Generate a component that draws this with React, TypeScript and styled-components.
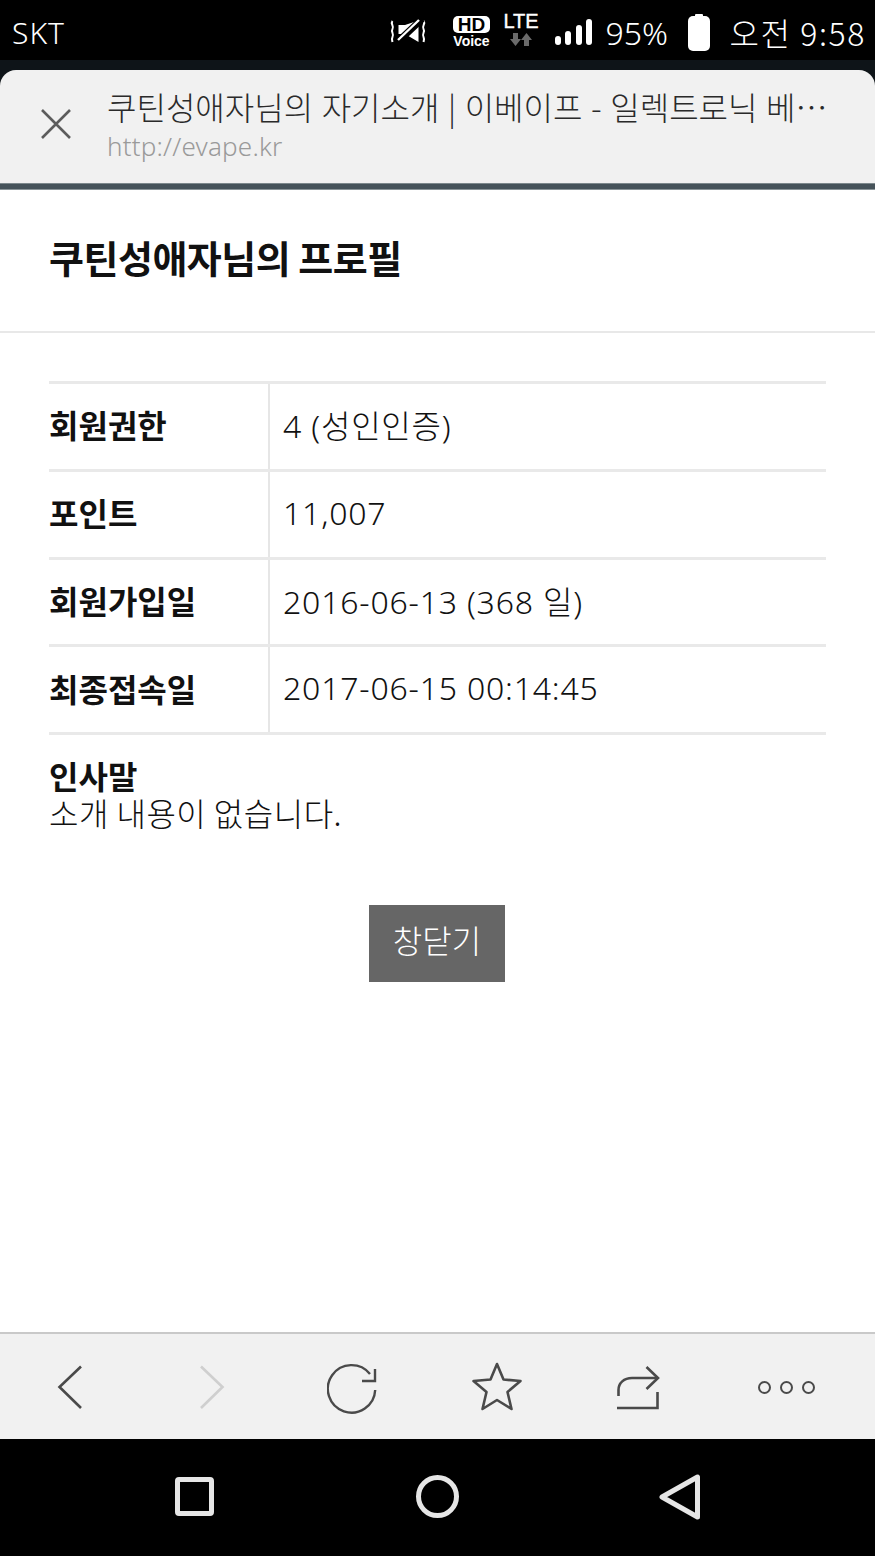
import React from "react";
import styled, { createGlobalStyle } from "styled-components";

const FONT = `"Noto Sans CJK KR", "Noto Sans", sans-serif`;
const VALUE_FONT = `"Noto Sans", "Noto Sans CJK KR", sans-serif`;

const GlobalStyle = createGlobalStyle`
  html, body {
    margin: 0;
    padding: 0;
    background: #000;
  }
  * {
    box-sizing: border-box;
  }
`;

const rows = [
  { label: "회원권한", value: "4 (성인인증)" },
  { label: "포인트", value: "11,007" },
  { label: "회원가입일", value: "2016-06-13 (368 일)" },
  { label: "최종접속일", value: "2017-06-15 00:14:45" },
];

export default function App() {
  return (
    <Screen>
      <GlobalStyle />
      <StatusBar>
        <Carrier>SKT</Carrier>
        <StatusRight>
          <MuteIcon width="38" height="26" viewBox="0 0 38 26" fill="none" stroke="#fff">
            <path d="M3.500 2 C1 5 5.500 7 3.500 10 C1.500 13 5.500 15 3.500 18 C2.500 20 3 21 3.500 23" strokeWidth="2" />
            <path d="M34.500 2 C37 5 32.500 7 34.500 10 C36.500 13 32.500 15 34.500 18 C35.500 20 35 21 34.500 23" strokeWidth="2" />
            <path d="M9.500 6 H16 L29.500 1.500 V23 L16 15 H9.500 Z" fill="#fff" stroke="none" />
            <path d="M8 23.500 L33 0" strokeWidth="7" stroke="#000" />
            <path d="M9 21 L30 1" strokeWidth="2.400" />
          </MuteIcon>
          <HdBadge>
            <HdBox>HD</HdBox>
            <HdVoice>Voice</HdVoice>
          </HdBadge>
          <LteBadge>
            <LteText>LTE</LteText>
            <svg width="24" height="14" viewBox="0 0 24 14" fill="#6a6a6a">
              <path d="M4 1 H9 V7 H12 L6.500 14 L1 7 H4 Z" />
              <path d="M15 14 H20 V8 H23 L17.500 1 L12 8 H15 Z" />
            </svg>
          </LteBadge>
          <SignalIcon width="38" height="28" viewBox="0 0 38 28" fill="#fff">
            <rect x="0" y="18" width="6" height="9" rx="3" />
            <rect x="10" y="13" width="6" height="14" rx="3" />
            <rect x="21" y="7" width="6" height="20" rx="3" />
            <rect x="31" y="1" width="6" height="26" rx="3" />
          </SignalIcon>
          <Percent>95%</Percent>
          <BatteryIcon width="22" height="37" viewBox="0 0 22 37" fill="#fff">
            <rect x="7" y="0" width="8" height="4" rx="1" />
            <rect x="0" y="2" width="22" height="35" rx="5" />
          </BatteryIcon>
          <Clock>오전 9:58</Clock>
        </StatusRight>
      </StatusBar>

      <Gap>
        <TabHeader>
          <CloseButton>
            <svg width="32" height="32" viewBox="0 0 32 32" stroke="#5c5c5c" strokeWidth="2.600" fill="none">
              <path d="M2 2 L30 30 M30 2 L2 30" />
            </svg>
          </CloseButton>
          <TabText>
            <TabTitle>쿠틴성애자님의 자기소개 | 이베이프 - 일렉트로닉 베이프 커뮤니티</TabTitle>
            <TabUrl>http://evape.kr</TabUrl>
          </TabText>
        </TabHeader>
        <TabEdge />
      </Gap>

      <Content>
        <PageTitle>쿠틴성애자님의 프로필</PageTitle>
        <Body>
          <InfoTable>
            {rows.map((row) => (
              <InfoRow key={row.label}>
                <InfoLabel>{row.label}</InfoLabel>
                <InfoValue>{row.value}</InfoValue>
              </InfoRow>
            ))}
          </InfoTable>
          <Greeting>
            <GreetingLabel>인사말</GreetingLabel>
            <GreetingText>소개 내용이 없습니다.</GreetingText>
          </Greeting>
          <ButtonRow>
            <CloseWindow>창닫기</CloseWindow>
          </ButtonRow>
        </Body>
      </Content>

      <Toolbar>
        <ToolSlot>
          <svg width="26" height="44" viewBox="0 0 26 44" fill="none" stroke="#4a4a4a" strokeWidth="2.600">
            <path d="M24 1.500 L2.500 22 L24 43" />
          </svg>
        </ToolSlot>
        <ToolSlot>
          <svg width="26" height="44" viewBox="0 0 26 44" fill="none" stroke="#cfcfcf" strokeWidth="2.600">
            <path d="M2 1.500 L23.500 22 L2 43" />
          </svg>
        </ToolSlot>
        <ToolSlot>
          <svg width="52" height="54" viewBox="0 0 52 54" fill="none" stroke="#4a4a4a" strokeWidth="2.400">
            <path d="M48.200 30 A23.700 23.700 0 1 1 43 14" />
            <path d="M48 9 V21 H35" />
          </svg>
        </ToolSlot>
        <ToolSlot>
          <svg width="52" height="50" viewBox="0 0 52 50" fill="none" stroke="#4a4a4a" strokeWidth="2.600" strokeLinejoin="round">
            <path d="M26 2 L32.500 17.500 L49.500 19 L36.500 30 L40.500 47 L26 38 L11.500 47 L15.500 30 L2.500 19 L19.500 17.500 Z" />
          </svg>
        </ToolSlot>
        <ToolSlot>
          <svg width="44" height="46" viewBox="0 0 44 46" fill="none" stroke="#4a4a4a" strokeWidth="2.600">
            <path d="M2.500 32 V26 C2.500 19 8 14 16 14 H41" />
            <path d="M30.500 3 L42 14 L30.500 25" />
            <path d="M41.500 28 V44 H1" />
          </svg>
        </ToolSlot>
        <ToolSlot>
          <Dots>
            <Dot />
            <Dot />
            <Dot />
          </Dots>
        </ToolSlot>
      </Toolbar>

      <NavBar>
        <NavSquare />
        <NavCircle />
        <svg width="42" height="46" viewBox="0 0 42 46" fill="none" stroke="#e6e6e6" strokeWidth="5" strokeLinejoin="round">
          <path d="M38.500 3 V43 L3 23 Z" />
        </svg>
      </NavBar>
    </Screen>
  );
}

const Screen = styled.div`
  width: 875px;
  height: 1556px;
  display: flex;
  flex-direction: column;
  overflow: hidden;
  background: #000;
  font-family: ${FONT};
`;

const StatusBar = styled.div`
  height: 60px;
  flex: none;
  display: flex;
  align-items: center;
  justify-content: space-between;
  padding: 4px 9px 0 12px;
  background: #000;
  color: #fff;
`;

const Carrier = styled.span`
  font-family: "Noto Sans", sans-serif;
  font-size: 30px;
  font-weight: 300;
  letter-spacing: 1px;
`;

const StatusRight = styled.div`
  display: flex;
  align-items: center;
`;

const MuteIcon = styled.svg`
  flex: none;
`;

const HdBadge = styled.div`
  display: flex;
  flex: none;
  flex-direction: column;
  align-items: center;
  margin-left: 25px;
  width: 38px;
`;

const HdBox = styled.span`
  width: 37px;
  height: 17px;
  margin-top: 1px;
  border-radius: 5px;
  background: #fff;
  color: #000;
  font-family: "Liberation Sans", sans-serif;
  font-size: 19px;
  font-weight: 700;
  line-height: 17px;
  text-align: center;
`;

const HdVoice = styled.span`
  font-family: "Liberation Sans", sans-serif;
  font-size: 14px;
  font-weight: 700;
  line-height: 16px;
`;

const LteBadge = styled.div`
  display: flex;
  flex: none;
  flex-direction: column;
  align-items: center;
  margin: -8px 0 0 14px;
  width: 33px;
  line-height: 0;
`;

const LteText = styled.span`
  font-family: "Liberation Sans", sans-serif;
  font-size: 20px;
  -webkit-text-stroke: 0.4px #fff;
  line-height: 22px;
`;

const SignalIcon = styled.svg`
  flex: none;
  margin-left: 18px;
`;

const Percent = styled.span`
  flex: none;
  width: 64px;
  margin-left: 12px;
  font-family: "Noto Sans", sans-serif;
  font-size: 32px;
  font-weight: 300;
  white-space: nowrap;
`;

const BatteryIcon = styled.svg`
  flex: none;
  margin-left: 19px;
`;

const Clock = styled.span`
  flex: none;
  margin-left: 19px;
  font-size: 32px;
  font-weight: 300;
  letter-spacing: 1.600px;
  white-space: nowrap;
`;

const Gap = styled.div`
  flex: none;
  padding-top: 10px;
  background: #0e1418;
`;

const TabHeader = styled.div`
  height: 113px;
  display: flex;
  align-items: flex-start;
  background: #f1f1f1;
  border-radius: 16px 16px 0 0;
`;

const TabEdge = styled.div`
  height: 7px;
  background: linear-gradient(#7d888c 0 1px, #46535a 1px 6px, #8a9498 6px);
`;

const CloseButton = styled.div`
  width: 107px;
  padding: 38px 0 0 40px;
  flex: none;
  line-height: 0;
`;

const TabText = styled.div`
  width: 727px;
  padding-top: 13px;
`;

const TabTitle = styled.div`
  font-size: 32px;
  font-weight: 300;
  line-height: 46px;
  word-spacing: 1.500px;
  color: #2a2a2a;
  white-space: nowrap;
  overflow: hidden;
  text-overflow: ellipsis;
`;

const TabUrl = styled.div`
  font-family: "Noto Sans", sans-serif;
  font-size: 26px;
  font-weight: 300;
  line-height: 36px;
  letter-spacing: 0.200px;
  margin-top: -1px;
  color: #9a9a9a;
`;

const Content = styled.div`
  flex: 1;
  background: #fff;
`;

const PageTitle = styled.h1`
  margin: 0;
  height: 143px;
  padding: 40px 49px 0;
  font-size: 38px;
  font-weight: 700;
  line-height: 54px;
  letter-spacing: -0.500px;
  color: #111;
  border-bottom: 2px solid #e8e8e8;
`;

const Body = styled.div`
  padding: 48px 49px 0;
`;

const InfoTable = styled.div`
  border-top: 3px solid #e9e9e9;
`;

const InfoRow = styled.div`
  display: grid;
  grid-template-columns: 221px 1fr;
  height: 87.750px;
  border-bottom: 3px solid #e9e9e9;
`;

const InfoLabel = styled.div`
  display: flex;
  align-items: center;
  padding-bottom: 4px;
  font-size: 32px;
  font-weight: 700;
  color: #111;
  border-right: 2px solid #e6e6e6;
`;

const InfoValue = styled.div`
  display: flex;
  align-items: center;
  padding: 0 0 4px 13px;
  font-family: ${VALUE_FONT};
  font-size: 32px;
  font-weight: 300;
  letter-spacing: 0.800px;
  color: #111;
`;

const Greeting = styled.div`
  padding-top: 18px;
`;

const GreetingLabel = styled.div`
  font-size: 32px;
  font-weight: 700;
  line-height: 44px;
  color: #111;
`;

const GreetingText = styled.div`
  font-size: 32px;
  font-weight: 300;
  line-height: 30px;
  letter-spacing: 0.500px;
  color: #111;
`;

const ButtonRow = styled.div`
  display: flex;
  justify-content: center;
  margin-top: 78px;
`;

const CloseWindow = styled.div`
  width: 136px;
  height: 77px;
  display: flex;
  align-items: center;
  justify-content: center;
  padding-bottom: 10px;
  margin-left: -1px;
  background: #666;
  color: #fff;
  font-size: 32px;
  font-weight: 300;
`;

const Toolbar = styled.div`
  height: 107px;
  flex: none;
  display: grid;
  grid-template-columns: 140px 143px 140px 147px 135px 1fr;
  align-items: center;
  background: #f1f1f1;
  border-top: 2px solid #c9c9c9;
`;

const ToolSlot = styled.div`
  display: flex;
  justify-content: center;
  line-height: 0;
`;

const Dots = styled.div`
  display: flex;
  gap: 9px;
  margin: 2px 8px 0 0;
`;

const Dot = styled.span`
  width: 13px;
  height: 13px;
  border: 2.500px solid #4a4a4a;
  border-radius: 50%;
`;

const NavBar = styled.div`
  height: 117px;
  flex: none;
  display: flex;
  align-items: center;
  justify-content: space-between;
  padding: 0 174px 2px 175px;
  background: #000;
`;

const NavSquare = styled.div`
  width: 39px;
  height: 39px;
  border: 5px solid #e6e6e6;
  border-radius: 4px;
`;

const NavCircle = styled.div`
  width: 43px;
  height: 43px;
  margin-left: 2px;
  border: 5px solid #e6e6e6;
  border-radius: 50%;
`;
